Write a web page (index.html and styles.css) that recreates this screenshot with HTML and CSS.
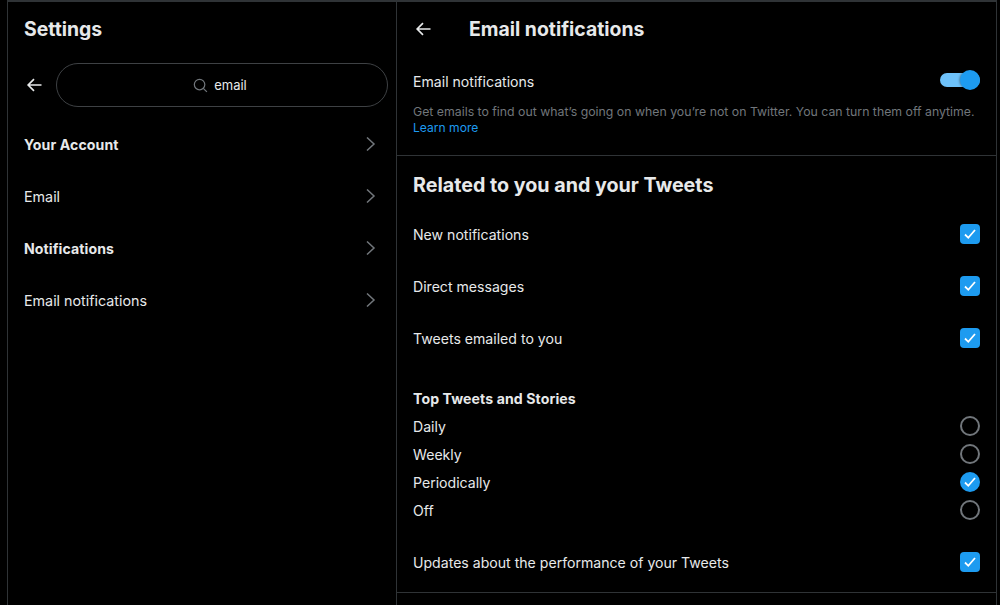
FILE: index.html
```html
<!DOCTYPE html>
<html lang="en">
<head>
<meta charset="utf-8">
<title>Email notifications</title>
<link rel="stylesheet" href="styles.css">
</head>
<body>
<div class="app">
  <aside class="sidebar">
    <h1 class="title side-title">Settings</h1>
    <div class="search-row">
      <svg class="back" viewBox="-1 0 24 24"><path d="M20 12H4.500M11 5l-7 7 7 7"/></svg>
      <div class="search">
        <svg class="search-icon" viewBox="0 0 16 16"><circle cx="7" cy="7" r="5.600"/><path d="M11 11l3.800 3.800"/></svg>
        <span>email</span>
      </div>
    </div>
    <nav class="nav">
      <a class="nav-item strong">Your Account<svg class="chev" viewBox="0 0 10 14"><path d="M1 .5L8 7l-7 6.500"/></svg></a>
      <a class="nav-item">Email<svg class="chev" viewBox="0 0 10 14"><path d="M1 .5L8 7l-7 6.500"/></svg></a>
      <a class="nav-item strong">Notifications<svg class="chev" viewBox="0 0 10 14"><path d="M1 .5L8 7l-7 6.500"/></svg></a>
      <a class="nav-item">Email notifications<svg class="chev" viewBox="0 0 10 14"><path d="M1 .5L8 7l-7 6.500"/></svg></a>
    </nav>
  </aside>
  <main class="content">
    <header class="head">
      <svg class="back" viewBox="-1 0 24 24"><path d="M20 12H4.500M11 5l-7 7 7 7"/></svg>
      <h1 class="title">Email notifications</h1>
    </header>
    <section class="master">
      <div class="master-row">
        <span>Email notifications</span>
        <span class="toggle"><span class="knob"></span></span>
      </div>
      <p class="hint">Get emails to find out what’s going on when you’re not on Twitter. You can turn them off anytime. <a class="link">Learn more</a></p>
    </section>
    <section class="group">
      <h2 class="group-title">Related to you and your Tweets</h2>
      <div class="row">New notifications<span class="check"><svg viewBox="0 0 20 20"><path d="M5 10.500l3.300 3.300L15 6"/></svg></span></div>
      <div class="row">Direct messages<span class="check"><svg viewBox="0 0 20 20"><path d="M5 10.500l3.300 3.300L15 6"/></svg></span></div>
      <div class="row">Tweets emailed to you<span class="check"><svg viewBox="0 0 20 20"><path d="M5 10.500l3.300 3.300L15 6"/></svg></span></div>
      <h3 class="sub-title">Top Tweets and Stories</h3>
      <div class="radio-row">Daily<span class="radio"></span></div>
      <div class="radio-row">Weekly<span class="radio"></span></div>
      <div class="radio-row">Periodically<span class="radio on"><svg viewBox="0 0 20 20"><path d="M5 10.500l3.300 3.300L15 6"/></svg></span></div>
      <div class="radio-row">Off<span class="radio"></span></div>
      <div class="row last">Updates about the performance of your Tweets<span class="check"><svg viewBox="0 0 20 20"><path d="M5 10.500l3.300 3.300L15 6"/></svg></span></div>
    </section>
  </main>
</div>
</body>
</html>
```
FILE: styles.css
```css
* { box-sizing: border-box; }
html, body { margin: 0; height: 100%; background: #000; overflow: hidden; }
body {
  font-family: Inter, "Liberation Sans", sans-serif;
  color: #e7e9ea;
  font-size: 14.100px;
}
.app {
  display: flex;
  height: 605px;
  margin-left: 7px;
  width: 990px;
  border-top: 2px solid #2f3336;
  border-left: 1px solid #2f3336;
  border-right: 1px solid #2f3336;
}
.sidebar {
  width: 389px;
  flex: none;
  border-right: 1px solid #2f3336;
  padding-top: 14px;
}
.title { margin: 0; font-size: 19.400px; line-height: 26px; font-weight: 700; }
.side-title { padding-left: 16px; }
.back { width: 20px; height: 20px; flex: none; fill: none; stroke: #e7e9ea; stroke-width: 2; }
.search-row { display: flex; align-items: center; gap: 12px; padding: 21px 8px 0 16px; }
.search {
  flex: 1;
  height: 44px;
  border: 1px solid #3e4144;
  border-radius: 22px;
  display: flex;
  align-items: center;
  justify-content: center;
  gap: 6px;
  padding-right: 4px;
  font-size: 13px;
}
.search-icon { width: 15px; height: 15px; fill: none; stroke: #71767b; stroke-width: 1.300; }
.nav { padding-top: 11px; }
.nav-item {
  display: flex;
  align-items: center;
  justify-content: space-between;
  height: 52px;
  padding: 0 20px 0 16px;
}
.nav-item:not(.strong) { font-size: 14.300px; }
.strong { font-weight: 700; letter-spacing: .1px; }
.chev { width: 10px; height: 14px; fill: none; stroke: #71767b; stroke-width: 1.500; }
.content { flex: 1; min-width: 0; }
.head { display: flex; align-items: center; gap: 36px; padding: 14px 16px 0; height: 40px; }
.master { padding: 29px 16px 0; height: 114px; border-bottom: 1px solid #2f3336; }
.master-row { display: flex; justify-content: space-between; align-items: center; height: 20px; }
.toggle {
  width: 40px; height: 14px; border-radius: 7px; background: #6ec2fa; margin-top: -2px;
  display: flex; justify-content: flex-end; align-items: center;
}
.knob { width: 20px; height: 20px; border-radius: 50%; background: #1d9bf0; box-shadow: -1px 0 2px rgba(0,0,0,.3); }
.hint { margin: 13px 0 0; font-size: 12.300px; line-height: 16px; color: #71767b; }
.link { color: #1d9bf0; display: block; font-size: 12.100px; }
.group { padding: 0 16px; }
.group-title { margin: 0; font-size: 19.700px; line-height: 24px; font-weight: 700; padding-top: 17px; height: 52px; }
.row { display: flex; justify-content: space-between; align-items: center; height: 52px; }
.check {
  width: 20px; height: 20px; border-radius: 4px; background: #1d9bf0; display: block;
}
.check svg, .radio svg { display: block; width: 20px; height: 20px; fill: none; stroke: #fff; stroke-width: 1.800; }
.sub-title { margin: 0; font-size: 14.100px; line-height: 20px; font-weight: 700; letter-spacing: .1px; padding-top: 25px; height: 48px; }
.radio-row { display: flex; justify-content: space-between; align-items: center; height: 28px; }
.radio { width: 20px; height: 20px; border-radius: 50%; border: 2px solid #71767b; display: block; }
.radio.on { border: 0; background: #1d9bf0; }
.row.last { margin-top: 12px; height: 57px; border-bottom: 1px solid #2f3336; margin-left: -16px; margin-right: -16px; padding: 0 16px 4px; }
```
